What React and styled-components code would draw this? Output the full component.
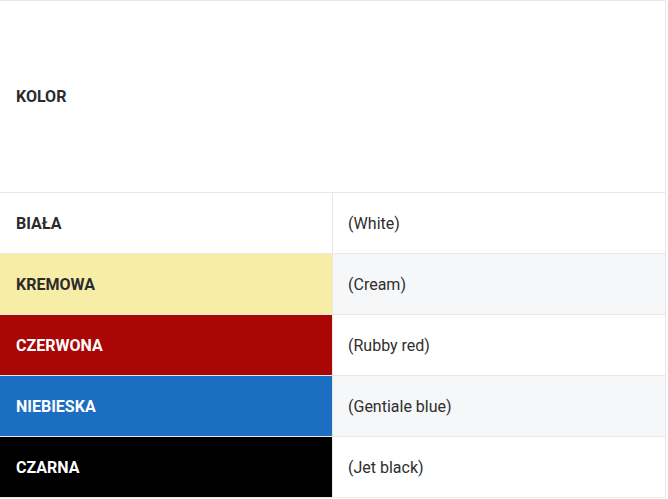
import styled, { createGlobalStyle } from "styled-components";

const GlobalStyle = createGlobalStyle`
  body {
    margin: 0;
    background: #fff;
    font-family: Roboto, "Liberation Sans", sans-serif;
  }
`;

const colors = [
  { name: "BIAŁA", label: "(White)", bg: "#ffffff", fg: "#2b2b2b" },
  { name: "KREMOWA", label: "(Cream)", bg: "#f7eda6", fg: "#2b2b2b" },
  { name: "CZERWONA", label: "(Rubby red)", bg: "#aa0606", fg: "#ffffff" },
  { name: "NIEBIESKA", label: "(Gentiale blue)", bg: "#1b6ec2", fg: "#ffffff" },
  { name: "CZARNA", label: "(Jet black)", bg: "#000000", fg: "#ffffff" },
];

export default function App() {
  return (
    <>
      <GlobalStyle />
      <Table>
        <Head>KOLOR</Head>
        {colors.map((c, i) => (
          <Row key={c.name}>
            <Swatch $bg={c.bg} $fg={c.fg}>{c.name}</Swatch>
            <Label $striped={i % 2 === 1}>{c.label}</Label>
          </Row>
        ))}
      </Table>
    </>
  );
}

const Table = styled.div`
  width: 666px;
  border-top: 1px solid #e8e8e8;
  border-right: 1px solid #e8e8e8;
  box-sizing: border-box;
`;

const Head = styled.div`
  height: 191px;
  display: flex;
  align-items: center;
  padding-left: 16px;
  font-size: 16px;
  font-weight: 700;
  color: #2b2b2b;
  border-bottom: 1px solid #e8e8e8;
`;

const Row = styled.div`
  display: grid;
  grid-template-columns: 332px 1fr;
  height: 61px;
  border-bottom: 1px solid #e8e8e8;
  box-sizing: border-box;
`;

const Swatch = styled.div`
  display: flex;
  align-items: center;
  padding-left: 16px;
  background: ${(p) => p.$bg};
  color: ${(p) => p.$fg};
  font-size: 16px;
  font-weight: 700;
`;

const Label = styled.div`
  display: flex;
  align-items: center;
  padding-left: 15px;
  border-left: 1px solid #e8e8e8;
  background: ${(p) => (p.$striped ? "#f6f7f9" : "#fff")};
  color: #2e2e2e;
  font-size: 16px;
`;
